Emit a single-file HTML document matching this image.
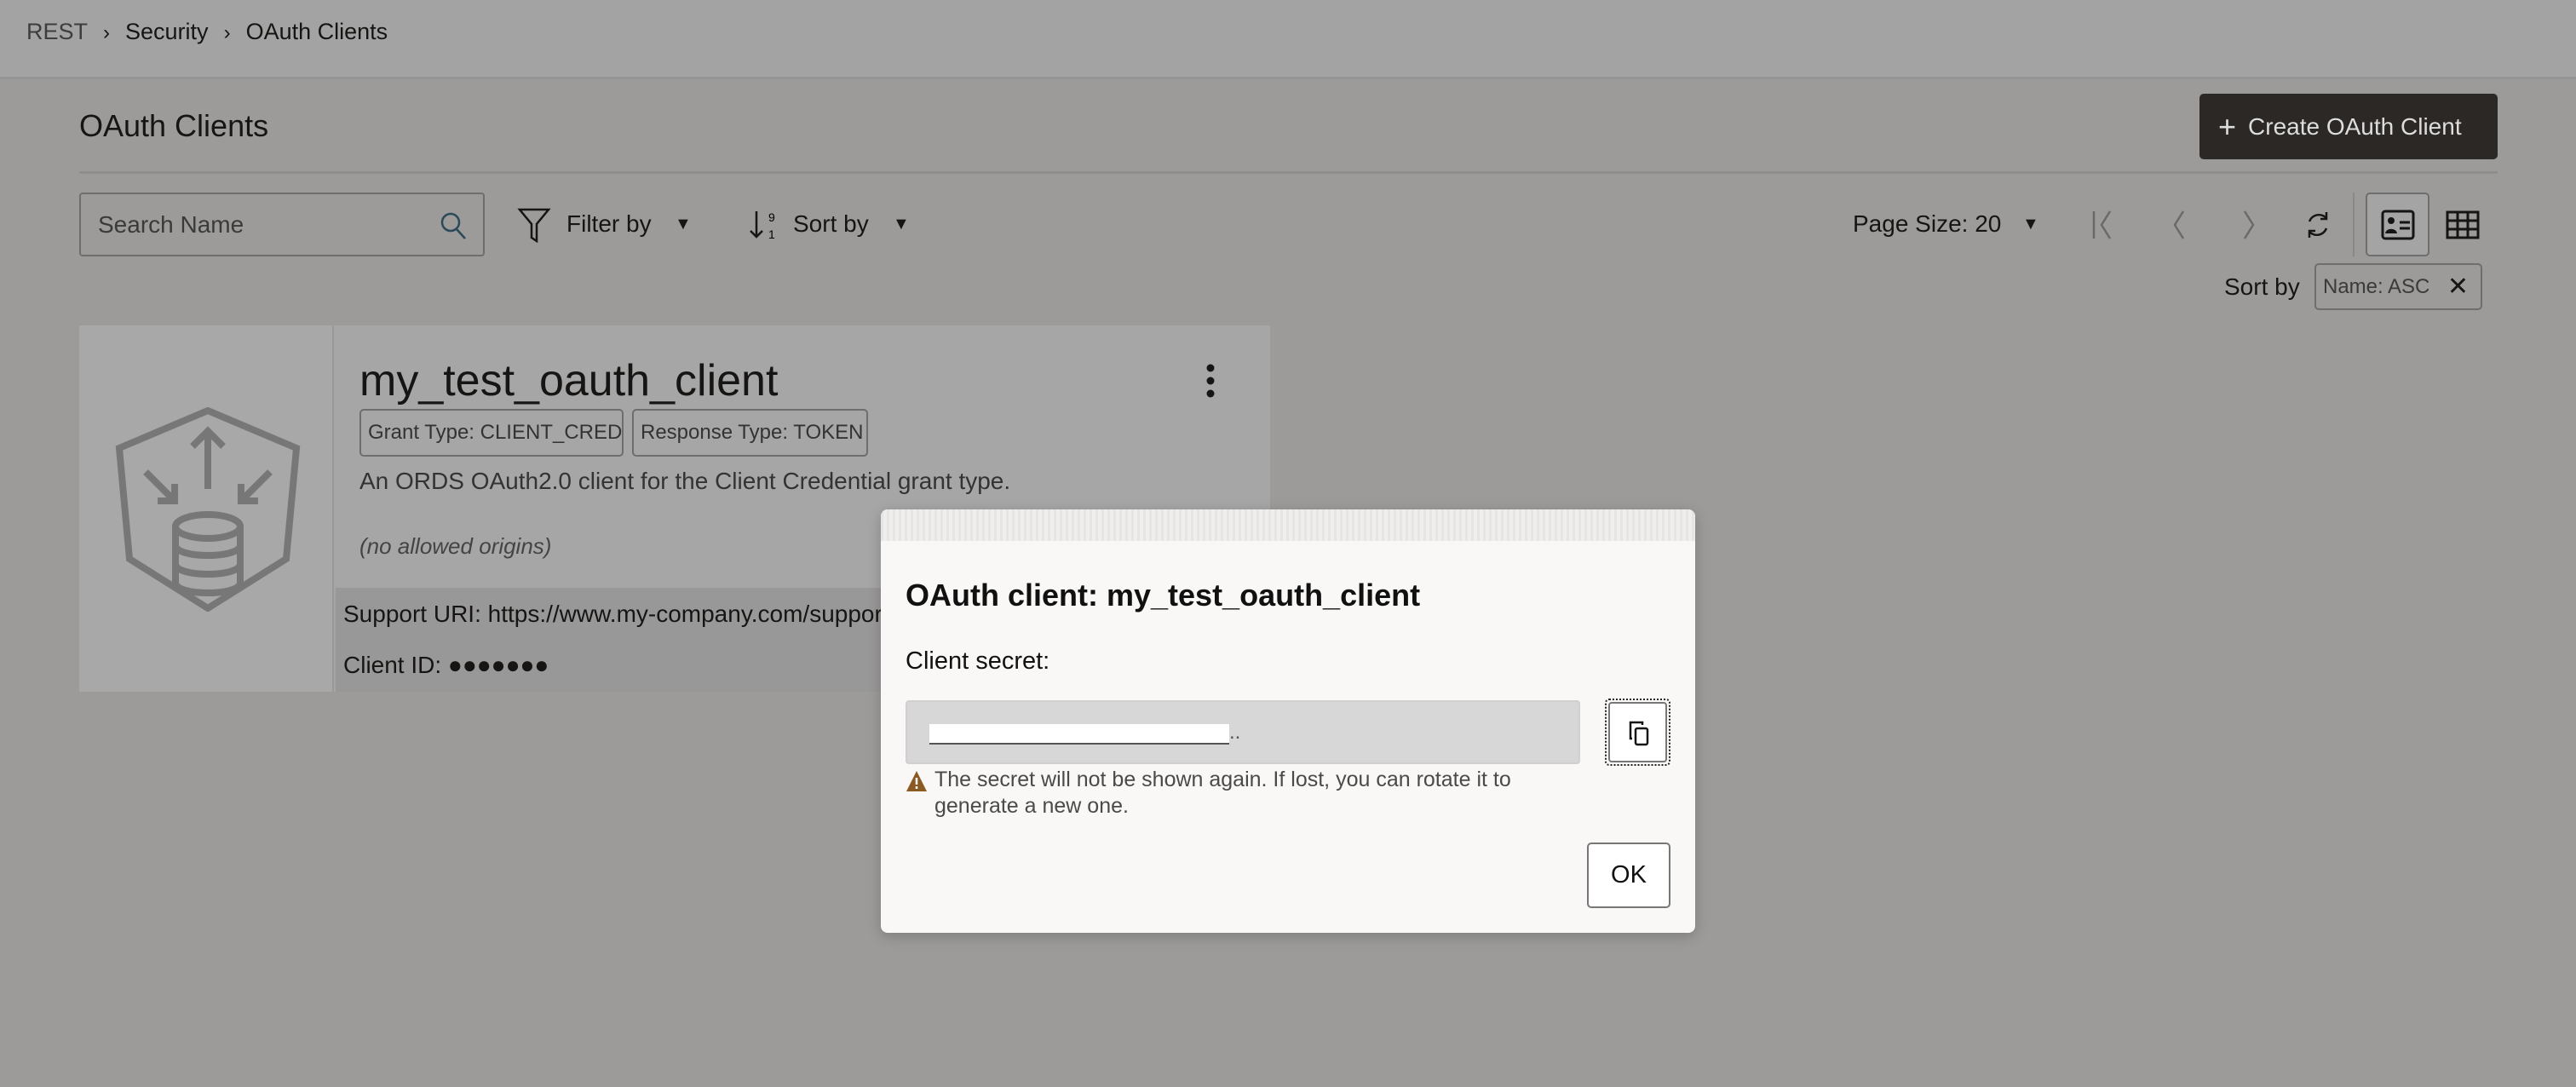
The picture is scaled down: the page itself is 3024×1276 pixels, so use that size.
<!DOCTYPE html>
<html><head><meta charset="utf-8"><style>
*{margin:0;padding:0;box-sizing:border-box}
body{width:3024px;height:1276px;overflow:hidden;background:#9c9b99;font-family:"Liberation Sans",sans-serif;color:#161513;position:relative}
.a{position:absolute;white-space:nowrap}
.hdr{left:0;top:0;width:3024px;height:93px;background:#a3a3a3;border-bottom:3px solid #959595}
</style></head><body>
<div class="a hdr"></div>
<div class="a" style="left:31px;top:20px;font-size:27px;line-height:34px"><span style="color:#3d3d3d">REST</span><span style="margin:0 18px;font-size:24px">›</span>Security<span style="margin:0 18px;font-size:24px">›</span>OAuth Clients</div>
<div class="a" style="left:93px;top:126px;font-size:36px;line-height:44px">OAuth Clients</div>
<div class="a" style="left:2582px;top:110px;width:350px;height:77px;background:#2b2825;border-radius:5px;color:#ddd;font-size:28px;line-height:77px;padding-left:22px"><span style="font-size:36px;vertical-align:-3px;margin-right:14px">+</span>Create OAuth Client</div>
<div class="a" style="left:93px;top:201px;width:2839px;height:3px;background:#8f8e8c"></div>
<div class="a" style="left:93px;top:226px;width:476px;height:75px;border:2px solid #6e6e6e;border-radius:4px;font-size:28px;line-height:71px;padding-left:20px;color:#3a3a3a">Search Name
<svg style="position:absolute;right:18px;top:20px" width="34" height="34" viewBox="0 0 34 34"><circle cx="14" cy="13" r="10" fill="none" stroke="#2a4a5a" stroke-width="2.5"/><path d="M21 21l10 11" stroke="#2a4a5a" stroke-width="2.5"/></svg></div>
<svg class="a" style="left:607px;top:243px" width="40" height="42" viewBox="0 0 40 42"><path d="M3 3h34L23 20v20l-6-4V20z" fill="none" stroke="#161513" stroke-width="2.5"/></svg>
<div class="a" style="left:665px;top:245px;font-size:28px;line-height:36px">Filter by</div>
<div class="a" style="left:792px;top:252px;font-size:20px">▼</div>
<svg class="a" style="left:878px;top:244px" width="40" height="40" viewBox="0 0 40 40"><path d="M10 4v30M3 27l7 7 7-7" fill="none" stroke="#161513" stroke-width="2.5"/><text x="24" y="16" font-size="14" font-family="Liberation Sans">9</text><text x="24" y="36" font-size="14" font-family="Liberation Sans">1</text></svg>
<div class="a" style="left:931px;top:245px;font-size:28px;line-height:36px">Sort by</div>
<div class="a" style="left:1048px;top:252px;font-size:20px">▼</div>
<div class="a" style="left:2175px;top:245px;font-size:28px;line-height:36px">Page Size: 20</div>
<div class="a" style="left:2374px;top:252px;font-size:20px">▼</div>
<svg class="a" style="left:2455px;top:246px" width="300" height="36" viewBox="0 0 300 36"><g fill="none" stroke="#6a6a6a" stroke-width="2.5"><path d="M3 2v32M22 2l-10 16 10 16"/><path d="M108 2L98 18l10 16"/><path d="M180 2l10 16-10 16"/></g><g fill="none" stroke="#161513" stroke-width="2.5"><path d="M276 10a12 12 0 0 0-20 4M256 26a12 12 0 0 0 20-4M276 3v8h-7M256 33v-8h7"/></g></svg>
<div class="a" style="left:2762px;top:226px;width:2px;height:75px;background:#888"></div>
<div class="a" style="left:2777px;top:226px;width:75px;height:75px;border:2px solid #6e6e6e;border-radius:5px;background:#a4a4a4"></div>
<svg class="a" style="left:2795px;top:246px" width="40" height="36" viewBox="0 0 40 36"><rect x="2" y="2" width="36" height="32" rx="3" fill="none" stroke="#161513" stroke-width="3"/><circle cx="12" cy="13" r="4" fill="#161513"/><path d="M5 28c1-7 13-7 14 0z" fill="#161513"/><path d="M22 15h12M22 22h12" stroke="#161513" stroke-width="3"/></svg>
<svg class="a" style="left:2871px;top:247px" width="40" height="34" viewBox="0 0 40 34"><rect x="2" y="2" width="36" height="30" fill="none" stroke="#161513" stroke-width="3"/><path d="M2 12h36M2 22h36M14 2v30M26 2v30" stroke="#161513" stroke-width="3"/></svg>
<div class="a" style="left:2611px;top:319px;font-size:28px;line-height:36px">Sort by</div>
<div class="a" style="left:2717px;top:309px;width:197px;height:55px;border:2px solid #6e6e6e;border-radius:5px;font-size:24px;line-height:51px;padding-left:8px;color:#3a3a3a">Name: ASC<span style="position:absolute;right:14px;top:0;font-size:30px;color:#161513">✕</span></div>
<div class="a" style="left:93px;top:382px;width:1398px;height:430px;background:#a6a6a6"></div>
<div class="a" style="left:93px;top:382px;width:299px;height:430px;background:#a8a8a8;border-right:2px solid #999"></div>
<div class="a" style="left:394px;top:690px;width:1097px;height:122px;background:#999898"></div>
<svg class="a" style="left:133px;top:478px" width="222" height="240" viewBox="0 0 222 240"><g fill="none" stroke="#777" stroke-width="8"><path d="M111 4l104 44-12 130-92 58-92-58L7 48z"/><path d="M111 96V28M93 46l18-18 18 18"/><path d="M38 76l34 34M52 110h20V90"/><path d="M184 76l-34 34M170 110h-20V90"/><ellipse cx="111" cy="140" rx="38" ry="14"/><path d="M73 140v66c0 16 76 16 76 0v-66M73 162c0 16 76 16 76 0M73 184c0 16 76 16 76 0"/></g></svg>
<div class="a" style="left:422px;top:416px;font-size:52px;line-height:62px">my_test_oauth_client</div>
<svg class="a" style="left:1413px;top:426px" width="16" height="42"><circle cx="8" cy="6" r="4.5" fill="#161513"/><circle cx="8" cy="21" r="4.5" fill="#161513"/><circle cx="8" cy="36" r="4.5" fill="#161513"/></svg>
<div class="a" style="left:422px;top:480px;width:310px;height:56px;border:2px solid #6e6e6e;border-radius:5px;font-size:24px;line-height:52px;padding-left:8px;color:#333">Grant Type: CLIENT_CRED</div>
<div class="a" style="left:742px;top:480px;width:277px;height:56px;border:2px solid #6e6e6e;border-radius:5px;font-size:24px;line-height:52px;padding-left:8px;color:#333">Response Type: TOKEN</div>
<div class="a" style="left:422px;top:548px;font-size:28px;line-height:34px;color:#333">An ORDS OAuth2.0 client for the Client Credential grant type.</div>
<div class="a" style="left:422px;top:624px;font-size:26px;line-height:34px;color:#444;font-style:italic">(no allowed origins)</div>
<div class="a" style="left:403px;top:704px;font-size:28px;line-height:34px">Support URI: https://www.my-company.com/support</div>
<div class="a" style="left:403px;top:764px;font-size:28px;line-height:34px">Client ID: ●●●●●●●</div>
<div class="a" style="left:1034px;top:598px;width:956px;height:497px;background:#f9f8f6;border-radius:8px;overflow:hidden;box-shadow:0 4px 16px rgba(0,0,0,.2)">
<div style="height:37px;background:repeating-linear-gradient(90deg,#e6e5e3 0 3px,#efeeec 3px 7px)"></div>
<div class="a" style="left:29px;top:79px;font-size:36px;font-weight:bold;line-height:44px;color:#111">OAuth client: my_test_oauth_client</div>
<div class="a" style="left:29px;top:160px;font-size:29px;line-height:36px;color:#111">Client secret:</div>
<div class="a" style="left:29px;top:224px;width:792px;height:75px;background:#d7d7d7;border:2px solid #d0d0d0;border-radius:4px"><div style="position:absolute;left:26px;top:26px;width:352px;height:22px;background:#fff;box-shadow:0 2px 0 #555"></div><span style="position:absolute;left:378px;top:22px;font-size:24px;color:#555">..</span></div>
<div class="a" style="left:850px;top:222px;width:77px;height:79px;border:2px dotted #222;border-radius:5px;padding:2px"><div style="width:100%;height:100%;border:2px solid #777;border-radius:4px;background:#fff"></div>
<svg style="position:absolute;left:24px;top:23px" width="30" height="32" viewBox="0 0 30 32"><path d="M6 22H4V3h14v3" fill="none" stroke="#161513" stroke-width="2.5"/><rect x="10" y="10" width="14" height="19" rx="2" fill="none" stroke="#161513" stroke-width="2.5"/></svg></div>
<svg class="a" style="left:29px;top:306px" width="26" height="26" viewBox="0 0 26 26"><path d="M13 1L25 25H1z" fill="#8a5a22"/><path d="M13 9v8M13 19v3" stroke="#fff" stroke-width="2.5"/></svg>
<div class="a" style="left:63px;top:302px;font-size:25px;line-height:31px;color:#4a4a4a">The secret will not be shown again. If lost, you can rotate it to<br>generate a new one.</div>
<div class="a" style="left:829px;top:391px;width:98px;height:77px;border:2px solid #777;border-radius:5px;background:#fff;font-size:29px;line-height:73px;text-align:center;color:#111">OK</div>
</div>
</body></html>
